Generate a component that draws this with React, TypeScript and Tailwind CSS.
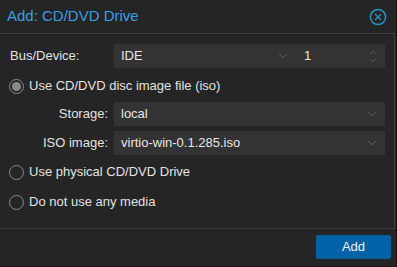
import { ChevronDown, ChevronUp } from "lucide-react";

const font = { fontFamily: '"Liberation Sans", Arial, sans-serif' };

function Radio({ checked, label }: { checked?: boolean; label: string }) {
  return (
    <div className="flex h-[24px] items-center pl-[9px]">
      <span className="flex h-[15px] w-[15px] items-center justify-center rounded-full border-[1.5px] border-[#8a8a8a]">
        {checked && <span className="h-[9px] w-[9px] rounded-full bg-[#8a8a8a]" />}
      </span>
      <span className="ml-[5px] text-[13px] text-[#e2e2e2]">{label}</span>
    </div>
  );
}

function Field({ label, value }: { label: string; value: string }) {
  return (
    <div className="flex h-[24px] items-center">
      <span className="w-[109px] pr-[1px] text-right text-[13px] text-[#e2e2e2]">{label}</span>
      <span className="w-[5px]" />
      <div className="flex h-full flex-1 items-center bg-[#333333] pl-[7px] pr-[6px]">
        <span className="flex-1 text-[13px] text-[#e6e6e6]">{value}</span>
        <ChevronDown className="h-[14px] w-[14px] text-[#6a6a6a]" strokeWidth={1.5} />
      </div>
    </div>
  );
}

export default function App() {
  return (
    <div
      className="relative flex h-[267px] w-[397px] flex-col overflow-hidden border-r border-b border-[#151515] bg-[#252525]"
      style={font}
    >
      {/* title */}
      <div className="flex h-[33px] items-center justify-between pl-[7px] pr-[9px]">
        <span className="text-[15px] text-[#3a9fe0]">Add: CD/DVD Drive</span>
        <svg width="18" height="18" viewBox="0 0 18 18" fill="none">
          <circle cx="9" cy="9" r="7.6" stroke="#2a8fc4" strokeWidth="1.5" />
          <path d="M6 6 L12 12 M12 6 L6 12" stroke="#2a8fc4" strokeWidth="1.4" />
        </svg>
      </div>

      {/* panel */}
      <div className="-ml-px mr-px h-[196px] border border-[#3c3c3c] pt-[10px] pr-[9px]">
        <div className="flex h-[24px] items-center">
          <span className="w-[114px] pl-[10px] text-[13px] text-[#e2e2e2]">Bus/Device:</span>
          <div className="flex h-full flex-1 items-center bg-[#333333]">
            <div className="flex h-full w-[183px] items-center pl-[7px] pr-[7px]">
              <span className="flex-1 text-[13px] text-[#e6e6e6]">IDE</span>
              <ChevronDown className="h-[14px] w-[14px] text-[#6a6a6a]" strokeWidth={1.5} />
            </div>
            <div className="flex h-full flex-1 items-center pl-[7px] pr-[6px]">
              <span className="flex-1 text-[13px] text-[#e6e6e6]">1</span>
              <div className="flex flex-col items-center text-[#6a6a6a]">
                <ChevronUp className="-mb-[3px] h-[11px] w-[12px]" strokeWidth={1.5} />
                <ChevronDown className="h-[11px] w-[12px]" strokeWidth={1.5} />
              </div>
            </div>
          </div>
        </div>

        <div className="mt-[6px]">
          <Radio checked label="Use CD/DVD disc image file (iso)" />
        </div>
        <div className="mt-[4px]">
          <Field label="Storage:" value="local" />
        </div>
        <div className="mt-[5px]">
          <Field label="ISO image:" value="virtio-win-0.1.285.iso" />
        </div>
        <div className="mt-[5px]">
          <Radio label="Use physical CD/DVD Drive" />
        </div>
        <div className="mt-[6px]">
          <Radio label="Do not use any media" />
        </div>
      </div>

      {/* footer */}
      <div className="flex justify-end pt-[6px] pr-[5px]">
        <button className="h-[24px] w-[75px] rounded-[2px] bg-[#0062a6] text-[13px] text-[#f0f0f0]">
          Add
        </button>
      </div>
    </div>
  );
}
